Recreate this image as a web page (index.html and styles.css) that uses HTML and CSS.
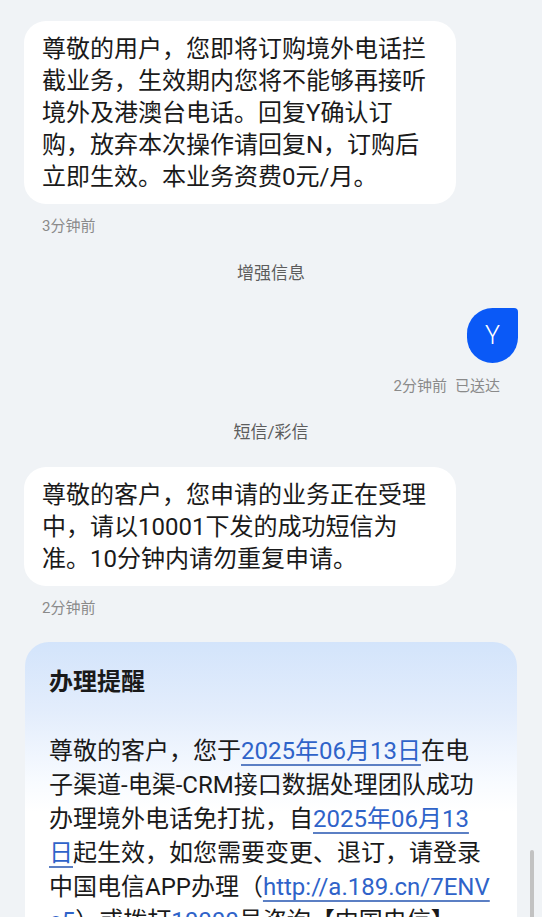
FILE: index.html
```html
<!DOCTYPE html>
<html lang="zh-CN">
<head>
<meta charset="utf-8">
<title>短信</title>
<link rel="stylesheet" href="styles.css">
</head>
<body>
<main class="chat">
  <div class="bubble">尊敬的用户，您即将订购境外电话拦截业务，生效期内您将不能够再接听境外及港澳台电话。回复Y确认订购，放弃本次操作请回复N，订购后立即生效。本业务资费0元/月。</div>
  <div class="time">3分钟前</div>

  <div class="label">增强信息</div>

  <div class="out">
    <div class="bubble-out">Y</div>
    <div class="time time-out"><span>2分钟前</span><span>已送达</span></div>
  </div>

  <div class="label">短信/彩信</div>

  <div class="bubble">尊敬的客户，您申请的业务正在受理中，请以10001下发的成功短信为准。10分钟内请勿重复申请。</div>
  <div class="time">2分钟前</div>

  <section class="card">
    <h2 class="card-title">办理提醒</h2>
    <p class="card-body">尊敬的客户，您于<a class="link" href="#">2025年06月13日</a>在电子渠道-电渠-CRM接口数据处理团队成功办理境外电话免打扰，自<a class="link" href="#">2025年06月13日</a>起生效，如您需要变更、退订，请登录中国电信APP办理（<a class="link" href="#">http://a.189.cn/7ENVe5</a>）或拨打<a class="link" href="#">10000</a>号咨询【中国电信】</p>
  </section>
</main>
<div class="scrollbar"></div>
</body>
</html>
```

FILE: styles.css
```css
html {
  scrollbar-width: none;
}
body {
  margin: 0;
  background: #f0f3f6;
  font-family: Roboto, "Noto Sans CJK SC", sans-serif;
  color: #1a1a1a;
  overflow: hidden;
}
.chat {
  display: flex;
  flex-direction: column;
  align-items: flex-start;
  padding: 21px 24px 40px 24px;
}
.bubble {
  box-sizing: border-box;
  width: 432px;
  background: #ffffff;
  border-radius: 22px;
  padding: 12px 18px 11px 18px;
  font-size: 24px;
  line-height: 32px;
  word-break: break-all;
}
.time {
  margin-top: 12px;
  font-size: 15px;
  line-height: 20px;
  color: #8a8a8a;
  padding-left: 18px;
}
.label {
  align-self: center;
  margin-top: 25px;
  font-size: 17px;
  line-height: 24px;
  color: #5c5c5c;
}
.out {
  align-self: stretch;
  display: flex;
  flex-direction: column;
  align-items: flex-end;
  margin-top: 23px;
}
.bubble-out {
  width: 51px;
  height: 55px;
  display: flex;
  align-items: center;
  justify-content: center;
  background: #0a59f7;
  color: #ffffff;
  font-size: 25px;
  font-weight: 300;
  border-radius: 26px 4px 26px 26px;
}
.time-out {
  margin-top: 13px;
  padding-left: 0;
  padding-right: 18px;
  display: flex;
  gap: 8px;
}
.out + .label {
  margin-top: 24px;
}
.label + .bubble {
  margin-top: 23px;
}
.card {
  box-sizing: border-box;
  width: 492px;
  margin-top: 24px;
  margin-left: 1px;
  padding: 24px 25px 24px 24px;
  border-radius: 24px;
  background: linear-gradient(180deg, #d3e4fb 0px, #e3edfc 70px, #f8fbff 140px, #ffffff 170px);
}
.card-title {
  margin: 0;
  font-size: 24px;
  line-height: 32px;
  font-weight: 700;
  color: #1a1a1a;
}
.card-body {
  margin: 36px 0 0 0;
  font-size: 24px;
  line-height: 34px;
  word-break: break-all;
}
.link {
  color: #2f63c9;
  text-decoration: underline;
  text-decoration-color: #5b7fc4;
  text-decoration-thickness: 2px;
  text-underline-offset: 5px;
}
.scrollbar {
  position: fixed;
  right: 8px;
  top: 850px;
  width: 4px;
  height: 90px;
  border-radius: 2px;
  background: #c2c2c2;
}
```
